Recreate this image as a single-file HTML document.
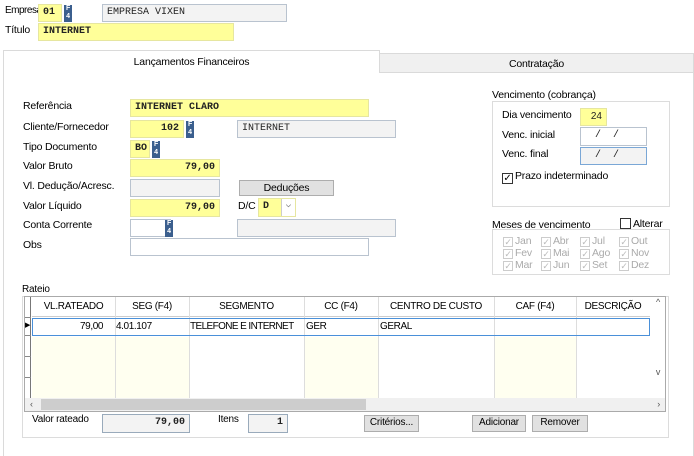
<!DOCTYPE html>
<html><head><meta charset="utf-8"><style>
*{box-sizing:border-box;margin:0;padding:0}
body{width:694px;height:456px;background:#fff;position:relative;overflow:hidden;font-family:"Liberation Sans",sans-serif;font-size:10.5px;letter-spacing:-0.2px;color:#000}
.a{position:absolute;white-space:nowrap}
.f{position:absolute;border:1px solid #b9c3cf;background:#fff;font-family:"Liberation Mono",monospace;font-size:10px;font-weight:bold;color:#222;padding:2px 4px;line-height:12px;white-space:nowrap;letter-spacing:0}
.y{background:#ffff99;border-color:#e6e6a0}
.g{background:#f3f3f3}
.r{text-align:right}
.k{position:absolute;width:8px;height:17px;background:#3b5f8e;color:#fff;font-size:7px;line-height:8px;text-align:center;font-weight:bold}
.b{position:absolute;border:1px solid #adadad;background:#e1e1e1;text-align:center;line-height:14px}
.cb{display:inline-block;width:11px;height:11px;border:1px solid #333;vertical-align:-2px;margin-right:2px;font-size:10px;line-height:9px;text-align:center}
.m{position:absolute;color:#aaa;font-size:10.5px}
.m span{display:inline-block;width:10px;height:10px;border:1px solid #ccc;margin-right:2px;vertical-align:-1px;font-size:9px;line-height:8px;text-align:center;color:#bbb}
.h{position:absolute;top:301px;font-size:10px;text-align:center;letter-spacing:-0.3px}
</style></head><body>
<div class="a" style="left:5px;top:5px;font-size:10px;letter-spacing:-0.5px">Empresa</div>
<div class="f y" style="left:38px;top:4px;width:24px;height:18px">01</div>
<div class="k" style="left:64px;top:5px">F<br>4</div>
<div class="f g" style="left:102px;top:4px;width:185px;height:18px;font-weight:normal">EMPRESA VIXEN</div>
<div class="a" style="left:5px;top:24px">Título</div>
<div class="f y" style="left:38px;top:23px;width:196px;height:18px">INTERNET</div>

<div class="a" style="left:3px;top:72px;width:691px;height:384px;border:1px solid #dadada;border-bottom:none"></div>
<div class="a" style="left:3px;top:50px;width:377px;height:23px;border:1px solid #dadada;border-bottom:none;background:#fff;text-align:center;line-height:22px">Lançamentos Financeiros</div>
<div class="a" style="left:379px;top:53px;width:315px;height:20px;border:1px solid #dadada;background:#f0f0f0;text-align:center;line-height:20px">Contratação</div>

<div class="a" style="left:23px;top:100px">Referência</div>
<div class="f y" style="left:130px;top:99px;width:239px;height:18px">INTERNET CLARO</div>
<div class="a" style="left:23px;top:121px">Cliente/Fornecedor</div>
<div class="f y r" style="left:130px;top:120px;width:54px;height:18px">102</div>
<div class="k" style="left:186px;top:121px">F<br>4</div>
<div class="f g" style="left:237px;top:120px;width:159px;height:18px;font-weight:normal">INTERNET</div>
<div class="a" style="left:23px;top:141px">Tipo Documento</div>
<div class="f y" style="left:130px;top:140px;width:20px;height:18px">BO</div>
<div class="k" style="left:152px;top:141px">F<br>4</div>
<div class="a" style="left:23px;top:160px">Valor Bruto</div>
<div class="f y r" style="left:130px;top:159px;width:90px;height:18px">79,00</div>
<div class="a" style="left:23px;top:180px">Vl. Dedução/Acresc.</div>
<div class="f g" style="left:130px;top:179px;width:90px;height:18px"></div>
<div class="b" style="left:239px;top:180px;width:95px;height:16px">Deduções</div>
<div class="a" style="left:23px;top:200px">Valor Líquido</div>
<div class="f y r" style="left:130px;top:199px;width:90px;height:18px">79,00</div>
<div class="a" style="left:238px;top:200px">D/C</div>
<div class="f y" style="left:258px;top:198px;width:38px;height:19px">D<span style="position:absolute;right:0;top:0;width:14px;height:17px;background:#fff;border-left:1px solid #ccc;color:#666;font-size:9px;text-align:center">⌵</span></div>
<div class="a" style="left:23px;top:219px">Conta Corrente</div>
<div class="f" style="left:130px;top:219px;width:41px;height:18px"></div>
<div class="k" style="left:165px;top:220px">F<br>4</div>
<div class="f g" style="left:237px;top:219px;width:159px;height:18px"></div>
<div class="a" style="left:23px;top:239px">Obs</div>
<div class="f" style="left:130px;top:238px;width:239px;height:18px"></div>

<div class="a" style="left:492px;top:89px">Vencimento (cobrança)</div>
<div class="a" style="left:492px;top:101px;width:178px;height:106px;border:1px solid #dcdcdc"></div>
<div class="a" style="left:502px;top:109px">Dia vencimento</div>
<div class="f y r" style="left:580px;top:108px;width:27px;height:18px;font-family:'Liberation Sans';font-weight:normal">24</div>
<div class="a" style="left:502px;top:129px">Venc. inicial</div>
<div class="f" style="left:580px;top:127px;width:67px;height:19px;font-weight:normal;padding-left:14px">/&nbsp;&nbsp;/</div>
<div class="a" style="left:502px;top:148px">Venc. final</div>
<div class="f g" style="left:580px;top:147px;width:67px;height:18px;font-weight:normal;padding-left:14px;border-color:#7aa7d6">/&nbsp;&nbsp;/</div>
<div class="a" style="left:502px;top:170px"><span class="cb">✓</span>Prazo indeterminado</div>
<div class="a" style="left:492px;top:219px">Meses de vencimento</div>
<div class="a" style="left:620px;top:218px"><span class="cb"></span>Alterar</div>
<div class="a" style="left:492px;top:229px;width:178px;height:46px;border:1px solid #dcdcdc"></div>
<div class="m" style="left:503px;top:235px"><span>✓</span>Jan</div>
<div class="m" style="left:503px;top:247px"><span>✓</span>Fev</div>
<div class="m" style="left:503px;top:259px"><span>✓</span>Mar</div>
<div class="m" style="left:541px;top:235px"><span>✓</span>Abr</div>
<div class="m" style="left:541px;top:247px"><span>✓</span>Mai</div>
<div class="m" style="left:541px;top:259px"><span>✓</span>Jun</div>
<div class="m" style="left:580px;top:235px"><span>✓</span>Jul</div>
<div class="m" style="left:580px;top:247px"><span>✓</span>Ago</div>
<div class="m" style="left:580px;top:259px"><span>✓</span>Set</div>
<div class="m" style="left:619px;top:235px"><span>✓</span>Out</div>
<div class="m" style="left:619px;top:247px"><span>✓</span>Nov</div>
<div class="m" style="left:619px;top:259px"><span>✓</span>Dez</div>

<div class="a" style="left:22px;top:284px;font-size:10px">Rateio</div>
<div class="a" style="left:22px;top:296px;width:647px;height:142px;border:1px solid #dcdcdc"></div>
<div class="a" style="left:24px;top:296px;width:642px;height:116px;border:1px solid #aaa;background:#fff"></div>
<div class="a" style="left:32px;top:337px;width:83px;height:61px;background:#fffff0"></div>
<div class="a" style="left:115px;top:337px;width:74px;height:61px;background:#fffff0"></div>
<div class="a" style="left:304px;top:337px;width:74px;height:61px;background:#fffff0"></div>
<div class="a" style="left:494px;top:337px;width:82px;height:61px;background:#fffff0"></div>
<div class="a" style="left:25px;top:297px;width:6px;height:102px;background:#fff;border-right:1px solid #777"></div>
<div class="a" style="left:25px;top:317px;width:6px;height:19px;border-bottom:1px solid #888;border-top:1px solid #888;font-size:7px;line-height:16px">▶</div>
<div class="a" style="left:25px;top:336px;width:6px;height:21px;border-bottom:1px solid #888"></div>
<div class="a" style="left:25px;top:357px;width:6px;height:21px;border-bottom:1px solid #888"></div>
<div class="a" style="left:32px;top:316px;width:618px;border-top:1px solid #ccc"></div>
<div class="h" style="left:32px;width:83px">VL.RATEADO</div>
<div class="h" style="left:115px;width:74px">SEG (F4)</div>
<div class="h" style="left:189px;width:115px">SEGMENTO</div>
<div class="h" style="left:304px;width:74px">CC (F4)</div>
<div class="h" style="left:378px;width:116px">CENTRO DE CUSTO</div>
<div class="h" style="left:494px;width:82px">CAF (F4)</div>
<div class="h" style="left:576px;width:74px">DESCRIÇÃO</div>
<div class="a" style="left:115px;top:297px;height:101px;border-left:1px solid #ddd"></div>
<div class="a" style="left:189px;top:297px;height:101px;border-left:1px solid #ddd"></div>
<div class="a" style="left:304px;top:297px;height:101px;border-left:1px solid #ddd"></div>
<div class="a" style="left:378px;top:297px;height:101px;border-left:1px solid #ddd"></div>
<div class="a" style="left:494px;top:297px;height:101px;border-left:1px solid #ddd"></div>
<div class="a" style="left:576px;top:297px;height:101px;border-left:1px solid #ddd"></div>
<div class="a" style="left:32px;top:318px;width:618px;height:18px;border:1px solid #4a90d9"></div>
<div class="a" style="left:80px;top:321px;font-size:10px;letter-spacing:-0.4px">79,00</div>
<div class="a" style="left:116px;top:321px;font-size:10px;letter-spacing:-0.4px">4.01.107</div>
<div class="a" style="left:190px;top:321px;font-size:10px;letter-spacing:-0.6px">TELEFONE E INTERNET</div>
<div class="a" style="left:306px;top:321px;font-size:10px;letter-spacing:-0.4px">GER</div>
<div class="a" style="left:380px;top:321px;font-size:10px;letter-spacing:-0.4px">GERAL</div>
<div class="a" style="left:651px;top:297px;width:14px;height:101px;background:#fff;color:#555;font-size:9px;text-align:center">^<br><br><br><br><br><br><br>v</div>
<div class="a" style="left:25px;top:398px;width:640px;height:13px;background:#f0f0f0;color:#555;font-size:9px;line-height:13px;padding-left:5px">‹<span style="position:absolute;left:16px;top:1px;width:325px;height:11px;background:#cdcdcd"></span><span style="position:absolute;right:5px">›</span></div>
<div class="a" style="left:32px;top:414px;font-size:10px">Valor rateado</div>
<div class="f g r" style="left:102px;top:414px;width:88px;height:19px;border-color:#9ab">79,00</div>
<div class="a" style="left:218px;top:414px;font-size:10px">Itens</div>
<div class="f g r" style="left:248px;top:414px;width:40px;height:19px;border-color:#9ab">1</div>
<div class="b" style="left:364px;top:415px;width:55px;height:17px;font-size:10px">Critérios...</div>
<div class="b" style="left:472px;top:415px;width:54px;height:17px;font-size:10px">Adicionar</div>
<div class="b" style="left:532px;top:415px;width:56px;height:17px;font-size:10px">Remover</div>
</body></html>
